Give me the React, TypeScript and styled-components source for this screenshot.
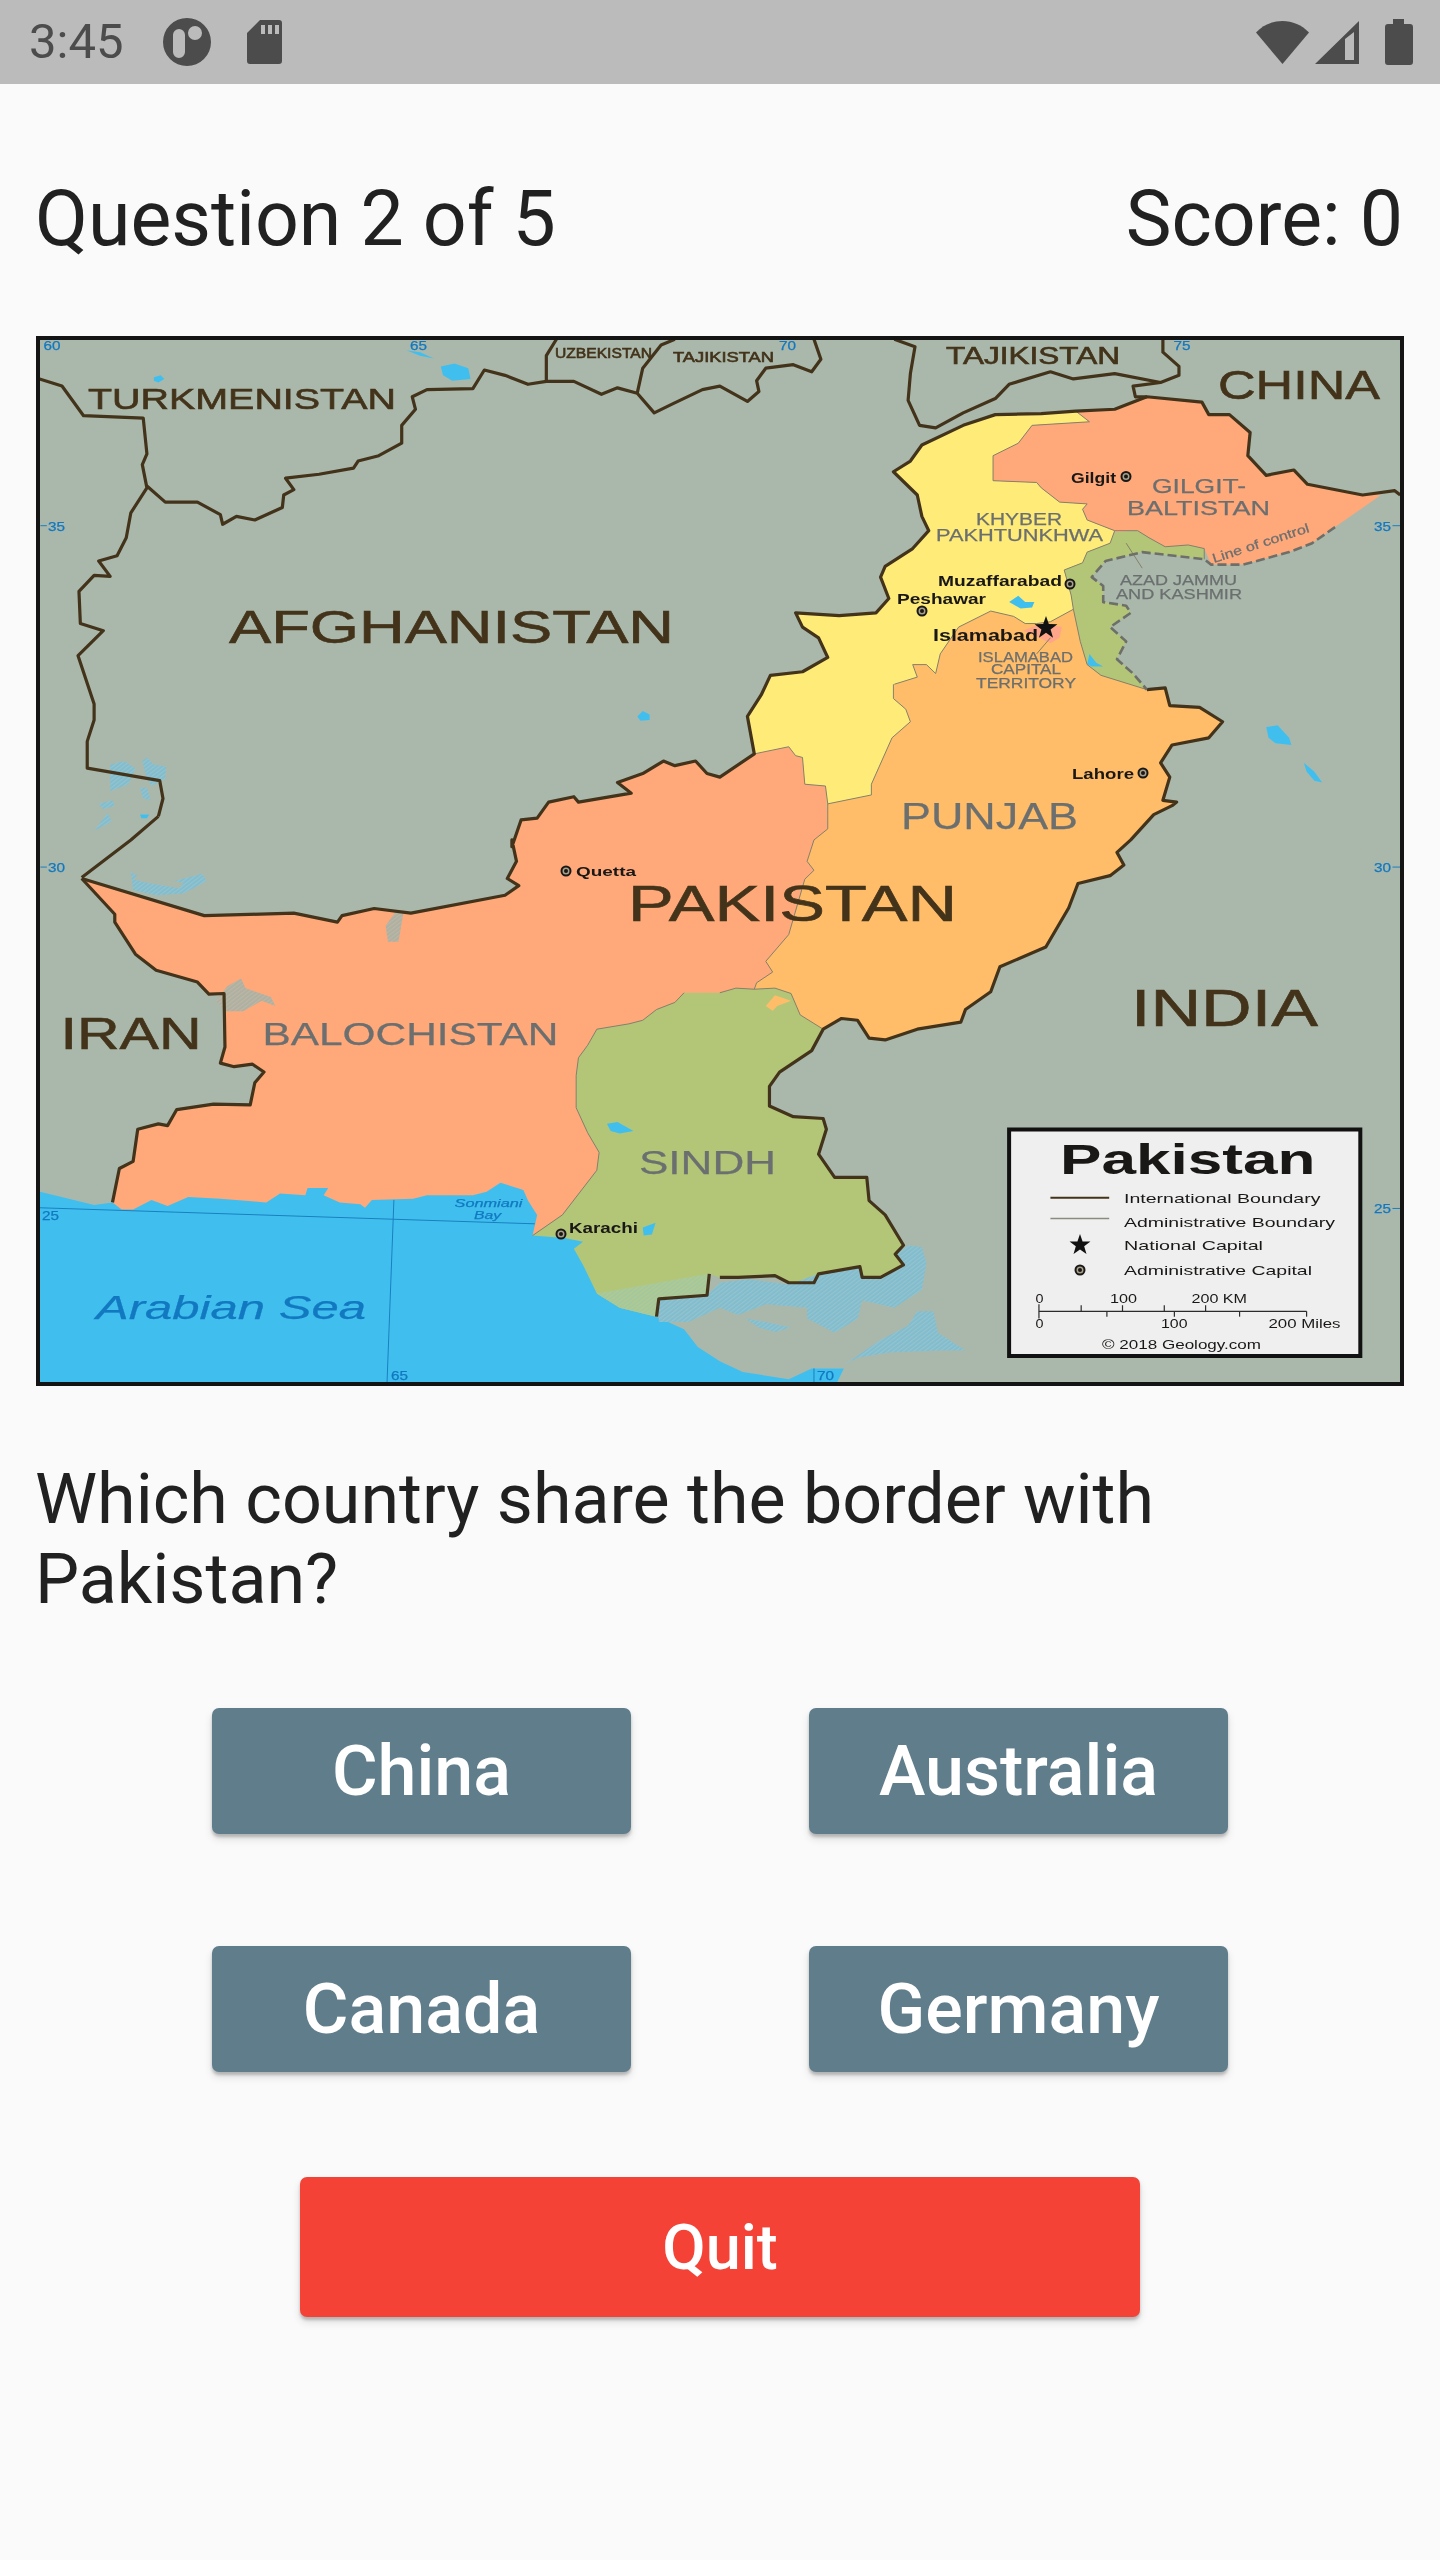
import React from 'react';
import styled, { createGlobalStyle } from 'styled-components';

// map outlines were traced in a 2.178 x 2.8 scaled space, four tiles of it
const shift = (dx: number, dy: number) => (s: string) =>
  s
    .trim()
    .split(/\s+/)
    .map(p => {
      const [x, y] = p.split(',').map(Number);
      return `${x + dx},${y + dy}`;
    })
    .join(' ');
const NW = shift(0, 0);
const NE = shift(1568, 0);
const SW = shift(0, 1456);
const SE = shift(1568, 1456);

const COLORS = {
  land: '#aab8ac',
  sea: '#40bfef',
  baloch: '#ffa87a',
  kp: '#ffec78',
  punjab: '#ffbd69',
  sindh: '#b3c678',
  dark: '#43331a',
  thin: '#86806a',
  loc: '#6d6f68',
};

const seaShape = [
  SW('86,985 150,1005 205,1022 245,1015 400,950 1200,950 1300,1100 1300,1270 1350,1310 1430,1335 1490,1370 1520,1420 1568,1460'),
  SE('50,1490 150,1510 200,1480 270,1480 255,1520'),
  SW('86,1520'),
].join(' ');

const balochNorth = [
  SW('178,108 445,212 640,205 735,230 745,212 815,192 895,205 1100,155 1130,128 1105,108 1125,60'),
  NW('1115,1456 1115,1475 1135,1400 1170,1395 1195,1350 1250,1335 1260,1350 1375,1325 1345,1295 1400,1270 1445,1235 1470,1248 1515,1235 1540,1270'),
  NE('0,1280 75,1215'),
].join(' ');

const balochShape = [
  balochNorth,
  NE('150,1195 165,1220 180,1225 185,1300 230,1305 235,1425'),
  SE('205,0 190,60 205,85 185,110 150,265 100,340 115,370 80,400 75,418 35,415 0,428'),
  SW('1470,455 1430,475 1400,505 1370,515 1300,530 1280,575 1260,610 1255,660 1255,750 1280,820 1305,875 1300,925 1255,1000 1225,1050 1160,1108 1170,1050 1150,1010 1140,980 1090,960 1060,985 1030,995 930,995 900,1005 810,1008 795,1030 785,1020 740,1015 705,995 715,975 670,975 665,995 610,990 580,1015 480,1005 410,1000 365,1025 330,1008 290,1035 265,1035 245,1015 260,920 290,900 300,810 345,795 365,800 385,755 465,740 545,742 555,680 575,650 550,628 510,635 480,625 490,580 488,430 455,432 430,398 340,365 295,320 250,230 250,208'),
].join(' ');

const sindhShape = [
  SW('1490,428'),
  SE('0,428 35,415 75,418 120,415 155,430 175,490 225,530 200,590 130,650 108,690 108,745 160,775 225,780 232,810 215,880 250,945 320,945 325,1010 360,1050 400,1135 382,1160 400,1190 350,1225 310,1225 305,1195 215,1215 205,1240 150,1240 120,1220 40,1225 0,1225'),
  SW('1545,1215 1540,1275 1435,1285 1430,1335 1350,1310 1300,1270 1270,1190 1250,1145 1270,1125 1230,1115 1160,1108 1225,1050 1255,1000 1300,925 1305,875 1280,820 1255,750 1255,660 1260,610 1280,575 1300,530 1370,515 1400,505 1430,475 1470,455'),
].join(' ');

const punjabEdge = NE('380,1020 430,1000 420,965 450,965 470,990 480,935 520,860 590,815 640,830 665,850 690,850 720,845 770,810');
const indiaNorth = NE('930,1035 970,1030 980,1080 1045,1085 1095,1125 1065,1170 985,1190 960,1240 980,1280 965,1345 995,1350 985,1360 945,1385');
const indiaSouth = SE('895,0 865,35 880,70 850,100 780,122 760,190 710,300 610,355 590,425 535,475 525,510 430,530 360,560 325,555 300,505 265,500 225,530');

const punjabShape = [
  punjabEdge,
  NE('785,900 800,965 830,995'),
  indiaNorth,
  indiaSouth,
  SE('175,490 155,430 120,415 75,418 80,400 115,370 100,340 150,265 185,110 205,85 190,60 205,0'),
  NE('235,1425 230,1305 235,1355 330,1330 330,1300 375,1170 415,1125 405,1090 378,1060'),
].join(' ');

const kpOuter = NE('75,1215 60,1110 90,1050 110,995 180,985 235,945 215,890 180,860 165,820 260,828 340,820 368,780 350,720 360,690 420,640 455,590 440,550 430,490 378,425 415,395 440,350 530,295 600,265 700,262 775,255');
const gbEdge = NE('775,255 805,285 680,295 650,345 595,380 595,450 690,455 700,470 740,510 800,515 790,530 800,560 860,590');

const kpShape = [
  kpOuter,
  gbEdge,
  NE('850,625 800,650 790,680 750,700 765,770 770,810 720,845 690,850 665,850 640,830 590,815 520,860 480,935 470,990 450,965 420,965 430,1000 380,1020 378,1060 405,1090 415,1125 375,1170 330,1300 330,1330 235,1355 230,1305 185,1300 180,1225 165,1220 150,1195'),
].join(' ');

const gbOuter = NE('775,255 860,250 930,215 1050,230 1065,265 1110,265 1155,315 1150,380 1190,435 1250,420 1280,460 1400,490 1470,478 1482,490');
const loc = NE('1340,580 1290,625 1240,650 1140,685 1070,685 1055,670 920,650 840,675 810,720 835,745 835,790 885,800 895,820 850,860 885,900 865,950 900,990 930,1035');

const gbShape = [
  NE('775,255 860,250 930,215 1050,230 1065,265 1110,265 1155,315 1150,380 1190,435 1250,420 1280,460 1400,490 1440,490'),
  NE('1340,580 1290,625 1240,650 1140,685 1070,685 1055,640 1020,630 970,635 935,610 910,590 860,595 860,590 800,560 790,530 800,515 740,510 700,470 690,455 595,450 595,380 650,345 680,295 805,285'),
].join(' ');

const ajkShape = NE('860,595 910,590 935,610 970,635 1020,630 1055,640 1055,670 920,650 840,675 810,720 835,745 835,790 885,800 895,820 850,860 885,900 865,950 900,990 930,1035 830,995 800,965 785,900 770,810 765,770 750,700 790,680 800,650 850,625');

const regions: [string, string][] = [
  [seaShape, COLORS.sea],
  [balochShape, COLORS.baloch],
  [sindhShape, COLORS.sindh],
  [punjabShape, COLORS.punjab],
  [kpShape, COLORS.kp],
  [gbShape, COLORS.baloch],
  [ajkShape, COLORS.sindh],
  [NE('660,870 700,850 745,860 740,890 720,905 680,880'), '#ffa58a'],
  [SE('100,465 120,435 155,450 125,465 115,478'), COLORS.punjab],
];

const lakes = [
  NW('335,160 350,155 358,165 345,175 335,170'),
  NW('960,130 990,122 1020,135 1025,165 985,170 965,155'),
  NW('885,85 915,90 945,108 915,100'),
  NW('1388,1110 1400,1095 1415,1105 1415,1120 1395,1122'),
  NW('305,1385 325,1385 320,1395 308,1395'),
  NE('630,790 650,772 665,790 685,790 680,805 655,808'),
  NE('800,965 805,935 820,960 835,970 810,970'),
  NE('1190,1140 1215,1135 1240,1170 1245,1190 1210,1185 1195,1170'),
  NE('1272,1240 1295,1265 1312,1295 1295,1290 1278,1265'),
  SW('1322,795 1345,790 1380,815 1350,822 1330,815'),
  SW('1400,1085 1428,1072 1420,1105 1402,1108'),
];

const marshes = [
  NW('240,1245 270,1235 295,1255 280,1300 240,1320'),
  NW('310,1235 320,1225 335,1245 362,1250 360,1285 330,1305 320,1285'),
  NW('305,1310 320,1310 328,1345 312,1340'),
  NW('215,1355 245,1345 250,1360 225,1370'),
  NW('205,1430 235,1380 243,1405'),
  SW('285,90 300,100 290,110 320,120 390,135 400,120 380,115 440,95 450,115 400,150 340,155 290,140'),
  SE('0,1240 60,1230 150,1245 215,1215 305,1195 315,1225 350,1225 400,1190 385,1160 410,1135 440,1140 450,1185 440,1260 380,1310 310,1290 300,1340 250,1380 190,1340 190,1310 100,1300 40,1330 0,1310'),
  SE('270,1470 350,1400 410,1360 430,1320 465,1320 475,1380 535,1430 480,1430 370,1435 300,1450'),
  SE('55,1340 100,1350 155,1365 120,1378 85,1365'),
  SW('1435,1285 1540,1275 1568,1240 1568,1310 1500,1350 1435,1350'),
];

const dryMarshes = [
  SW('840,240 865,195 880,195 868,285 845,285'),
  SW('495,410 525,388 535,415 590,440 600,465 570,450 530,480 490,480 470,450'),
];

const coastMarsh = SW('1300,1270 1545,1215 1540,1275 1435,1285 1430,1335 1350,1310');

const heavyBorders = [
  [balochNorth, kpOuter, gbOuter].join(' '),
  SW('178,108 250,208 250,230 295,320 340,365 430,398 455,432 488,430 490,580 480,625 510,635 550,628 575,650 555,680 545,742 465,740 385,755 365,800 345,795 300,810 290,900 260,920 245,1015'),
  NW('345,1390 355,1340 348,1290 190,1255 190,1180 205,1120 205,1075 170,940 225,870 175,850 172,760 205,715 240,718 215,675 255,660 275,610 285,540 320,470 310,405 320,375 312,275 182,268 135,185 86,165'),
  SW('178,105 285,0') + ' ' + NW('345,1390'),
  [NW('320,465 360,510 430,510 480,545 485,572 515,550 555,560 615,525 618,490 640,475 622,443 695,432 770,415 780,395 825,380 875,345 875,295 905,250 898,215 930,195 1030,192 1055,140 1100,155 1150,180 1190,172 1250,172 1310,208 1345,190 1388,205 1425,260 1465,235 1530,195'), NE('0,185 60,228 85,200 80,170 100,135 160,125 200,145 220,110 205,54')].join(' '),
  NW('1212,54 1190,100 1190,172'),
  NW('1470,54 1440,70 1400,135 1388,205'),
  NE('380,54 425,75 415,150 410,225 435,295 470,302 530,260 600,220 630,180 720,145 770,165 860,150 960,175 1000,155 1000,130 965,90 965,54'),
  NE('960,175 900,185 905,215 930,215'),
  [indiaNorth, indiaSouth, SE('200,590 130,650 108,690 108,745 160,775 225,780 232,810 215,880 250,945 320,945 325,1010 360,1050 400,1135 382,1160 400,1190 350,1225 310,1225 305,1195 215,1215 205,1240 150,1240 120,1220 40,1225 0,1225')].join(' '),
  SW('1545,1215 1540,1275 1435,1285 1430,1335'),
];

const thinBorders = [
  gbEdge,
  punjabEdge,
  NE('378,1020 378,1060 405,1090 415,1125 375,1170 330,1300 330,1330 235,1355 230,1305 185,1300 180,1225 165,1220 150,1195 75,1215'),
  NE('235,1355 235,1425') + ' ' + SE('205,0 190,60 205,85 185,110 150,265 100,340 115,370 80,400 75,418 35,415 0,428'),
  SW('1490,428 1470,455 1430,475 1400,505 1370,515 1300,530 1280,575 1260,610 1255,660 1255,750 1280,820 1305,875 1300,925 1255,1000 1225,1050 1160,1108'),
  SE('75,418 120,415 155,430 175,490 225,530'),
  NE('770,810 765,770 750,700 790,680 800,650 850,625 860,590 910,590 935,610 970,635 1020,630 1055,640 1055,670'),
  NE('770,810 785,900 800,965 830,995 930,1035'),
  NE('885,625 920,695'),
  NE('690,935 720,890'),
];

// graticule lines and legend rules, same traced space
const gridLines = [SW('86,1030 1165,1075'), SW('858,1008 843,1520'), SE('205,1480 205,1520'), NW('88,576 102,576'), NW('88,1532 102,1532'), NE('1465,576 1482,576'), NE('1465,1532 1482,1532'), SE('1465,1032 1482,1032')];
const scaleLines = [
  SE('695,1320 1278,1320'),
  SE('695,1300 695,1340'),
  ...[787, 877, 968, 1058].map(x => SE(`${x},1303 ${x},1320`)),
  ...[843, 990, 1132, 1278].map(x => SE(`${x},1320 ${x},1335`)),
];

type Tone = 'dark' | 'gray' | 'black' | 'blue';
type Label = { t: string; x: number; y: number; w: number; s: number; tone: Tone; bold?: boolean; italic?: boolean };

const labels: Label[] = [
  { t: 'TURKMENISTAN', x: 88, y: 408.5, w: 308, s: 29, tone: 'dark' },
  { t: 'AFGHANISTAN', x: 229, y: 643, w: 445, s: 46, tone: 'dark' },
  { t: 'UZBEKISTAN', x: 555, y: 358, w: 97, s: 14, tone: 'dark' },
  { t: 'TAJIKISTAN', x: 673, y: 362, w: 101, s: 14, tone: 'dark' },
  { t: 'TAJIKISTAN', x: 946, y: 364, w: 174, s: 23, tone: 'dark' },
  { t: 'CHINA', x: 1218, y: 399, w: 162, s: 40, tone: 'dark' },
  { t: 'Gilgit', x: 1071, y: 482.5, w: 45, s: 14, tone: 'black', bold: true },
  { t: 'GILGIT-', x: 1152, y: 493, w: 94, s: 21, tone: 'gray' },
  { t: 'BALTISTAN', x: 1127, y: 514.5, w: 143, s: 21, tone: 'gray' },
  { t: 'KHYBER', x: 976, y: 524.5, w: 86, s: 17, tone: 'gray' },
  { t: 'PAKHTUNKHWA', x: 936, y: 541, w: 167, s: 17, tone: 'gray' },
  { t: 'AZAD JAMMU', x: 1120, y: 585, w: 117, s: 15, tone: 'gray' },
  { t: 'AND KASHMIR', x: 1116, y: 598.5, w: 126, s: 15, tone: 'gray' },
  { t: 'Muzaffarabad', x: 938, y: 586, w: 124, s: 14.5, tone: 'black', bold: true },
  { t: 'Peshawar', x: 897, y: 604, w: 89, s: 14, tone: 'black', bold: true },
  { t: 'Islamabad', x: 933, y: 641, w: 105, s: 16, tone: 'black', bold: true },
  { t: 'ISLAMABAD', x: 978, y: 662, w: 95, s: 14, tone: 'gray' },
  { t: 'CAPITAL', x: 991, y: 674, w: 70, s: 14, tone: 'gray' },
  { t: 'TERRITORY', x: 976, y: 688, w: 100, s: 14, tone: 'gray' },
  { t: 'Lahore', x: 1072, y: 779, w: 62, s: 14, tone: 'black', bold: true },
  { t: 'PUNJAB', x: 901, y: 828.5, w: 177, s: 36, tone: 'gray' },
  { t: 'Quetta', x: 576, y: 876, w: 60, s: 13, tone: 'black', bold: true },
  { t: 'PAKISTAN', x: 628, y: 921, w: 329, s: 50, tone: 'dark' },
  { t: 'IRAN', x: 60.5, y: 1049, w: 141, s: 44, tone: 'dark' },
  { t: 'BALOCHISTAN', x: 262.5, y: 1045, w: 296, s: 31, tone: 'gray' },
  { t: 'SINDH', x: 639, y: 1174, w: 137, s: 33, tone: 'gray' },
  { t: 'INDIA', x: 1131, y: 1026, w: 187, s: 52, tone: 'dark' },
  { t: 'Arabian Sea', x: 96, y: 1318.5, w: 270, s: 33, tone: 'blue', italic: true },
  { t: 'Sonmiani', x: 454.5, y: 1207, w: 68, s: 11, tone: 'blue', italic: true },
  { t: 'Bay', x: 474, y: 1218.5, w: 27, s: 11, tone: 'blue', italic: true },
  { t: 'Karachi', x: 569, y: 1233, w: 69, s: 14, tone: 'black', bold: true },
  { t: '60', x: 43.5, y: 349.5, w: 17, s: 12, tone: 'blue' },
  { t: '65', x: 410, y: 349.5, w: 17, s: 12, tone: 'blue' },
  { t: '70', x: 779, y: 349.5, w: 17, s: 12, tone: 'blue' },
  { t: '75', x: 1173.5, y: 349.5, w: 17, s: 12, tone: 'blue' },
  { t: '35', x: 48, y: 530.5, w: 17, s: 12, tone: 'blue' },
  { t: '35', x: 1374, y: 530.5, w: 17, s: 12, tone: 'blue' },
  { t: '30', x: 48, y: 872, w: 17, s: 12, tone: 'blue' },
  { t: '30', x: 1374, y: 872, w: 17, s: 12, tone: 'blue' },
  { t: '25', x: 42, y: 1219.5, w: 17, s: 12, tone: 'blue' },
  { t: '25', x: 1374, y: 1213, w: 17, s: 12, tone: 'blue' },
  { t: '65', x: 391, y: 1380, w: 17, s: 12, tone: 'blue' },
  { t: '70', x: 817, y: 1380, w: 17, s: 12, tone: 'blue' },
  { t: 'Pakistan', x: 1060, y: 1174, w: 255.5, s: 43, tone: 'black', bold: true },
  { t: 'International Boundary', x: 1124, y: 1202.5, w: 196.5, s: 13.5, tone: 'black' },
  { t: 'Administrative Boundary', x: 1124, y: 1227, w: 211, s: 13.5, tone: 'black' },
  { t: 'National Capital', x: 1124, y: 1250, w: 139, s: 13.5, tone: 'black' },
  { t: 'Administrative Capital', x: 1124, y: 1275, w: 188, s: 13.5, tone: 'black' },
  { t: '0', x: 1035.5, y: 1302.5, w: 8, s: 12, tone: 'black' },
  { t: '100', x: 1110, y: 1302.5, w: 27, s: 12, tone: 'black' },
  { t: '200 KM', x: 1191.5, y: 1302.5, w: 55.5, s: 12, tone: 'black' },
  { t: '0', x: 1035.5, y: 1328, w: 8, s: 12, tone: 'black' },
  { t: '100', x: 1161, y: 1328, w: 26.5, s: 12, tone: 'black' },
  { t: '200 Miles', x: 1268.5, y: 1328, w: 72, s: 12, tone: 'black' },
  { t: '© 2018 Geology.com', x: 1102, y: 1348.5, w: 159, s: 12, tone: 'black' },
];

const capitals = [
  [1126, 476.5],
  [1070, 584],
  [922, 611],
  [1143, 773],
  [566, 871],
  [561, 1234],
  [1080, 1270],
];

const starPoints = (cx: number, cy: number, r: number) =>
  Array.from({ length: 10 }, (_, i) => {
    const a = (Math.PI / 5) * i - Math.PI / 2;
    const d = i % 2 ? r * 0.4 : r;
    return `${cx + Math.cos(a) * d},${cy + Math.sin(a) * d}`;
  }).join(' ');

const toneColor: Record<Tone, string> = {
  dark: '#43331a',
  gray: '#6b6f6f',
  black: '#1a1816',
  blue: '#1278c0',
};

const toneStroke: Record<Tone, number> = {
  dark: 0.6,
  gray: 0.25,
  black: 0,
  blue: 0.25,
};

const hatches: [string, string, string][] = [
  ['hatch', '#82bccd', '#93c4cf'],
  ['hatch-dry', '#aeb0a2', '#bcb6a4'],
  ['hatch-coast', '#a5c79f', '#b0cb8e'],
];

const options = ['China', 'Australia', 'Canada', 'Germany'];

function StatusIcons() {
  return (
    <StatusRow>
      <StatusLeft>
        <StatusTime>3:45</StatusTime>
        <svg width="50" height="50" viewBox="0 0 50 50">
          <path
            fill="#4c4c4c"
            fillRule="evenodd"
            d="M25 1a24 24 0 1 0 0 48a24 24 0 0 0 0-48zM17 12a6 6 0 0 1 6 6v17a6 6 0 0 1-12 0V18a6 6 0 0 1 6-6zM33 9a7 7 0 1 1 0 14a7 7 0 0 1 0-14z"
          />
        </svg>
        <SdIcon width="36" height="44" viewBox="0 0 36 44">
          <path
            fill="#4c4c4c"
            fillRule="evenodd"
            d="M13 0H32a3 3 0 0 1 3 3V41a3 3 0 0 1-3 3H3a3 3 0 0 1-3-3V13zM14 5v9h4V5zM21 5v9h4V5zM28 5v9h4V5z"
          />
        </SdIcon>
      </StatusLeft>
      <StatusRight>
        <svg width="54" height="45" viewBox="0 0 54 45">
          <path fill="#4c4c4c" d="M0 12.5C14 -3 39 -3 53 12.5L26.5 44z" />
        </svg>
        <svg width="45" height="44" viewBox="0 0 45 44">
          <path
            fill="#4c4c4c"
            fillRule="evenodd"
            d="M0 44L44 1V44zM30 19v21h9V12z"
          />
        </svg>
        <svg width="28" height="46" viewBox="0 0 28 46">
          <path
            fill="#4c4c4c"
            d="M8 0h11v5h6a3 3 0 0 1 3 3v35a3 3 0 0 1-3 3H3a3 3 0 0 1-3-3V8a3 3 0 0 1 3-3h5z"
          />
        </svg>
      </StatusRight>
    </StatusRow>
  );
}

function PakistanMap() {
  return (
    <MapFrame>
      <MapSvg viewBox="40 340 1360 1042" width="1360" height="1042">
        <defs>
          {hatches.map(([id, base, stripe]) => (
            <pattern key={id} id={id} width="8" height="8" patternUnits="userSpaceOnUse" patternTransform="rotate(45)">
              <rect width="8" height="8" fill={base} />
              <rect width="3" height="8" fill={stripe} />
            </pattern>
          ))}
        </defs>
        <rect x="40" y="340" width="1360" height="1042" fill={COLORS.land} />
        <g transform="translate(0 320) scale(0.4591 0.3571)">
          {regions.map(([points, fill], i) => (
            <Region key={i} points={points} $fill={fill} />
          ))}
          {marshes.map((points, i) => (
            <Region key={i} points={points} $fill="url(#hatch)" />
          ))}
          {dryMarshes.map((points, i) => (
            <Region key={i} points={points} $fill="url(#hatch-dry)" />
          ))}
          <Region points={coastMarsh} $fill="url(#hatch-coast)" />
          {lakes.map((points, i) => (
            <Region key={i} points={points} $fill={COLORS.sea} />
          ))}
          {gridLines.map((points, i) => (
            <Line key={i} points={points} $color="#1a7fc0" $width={1} />
          ))}
          {thinBorders.map((points, i) => (
            <Line key={i} points={points} $color={COLORS.thin} $width={1} />
          ))}
          {heavyBorders.map((points, i) => (
            <Line key={i} points={points} $color={COLORS.dark} $width={3.2} />
          ))}
          <Line points={loc} $color={COLORS.loc} $width={2.6} $dashed />
          <LegendBox points={SE('630,811 1395,811 1395,1445 630,1445')} />
          <Line points={SE('720,1002 848,1002')} $color={COLORS.dark} $width={2} />
          <Line points={SE('720,1060 848,1060')} $color="#8a8a80" $width={1.5} />
          {scaleLines.map((points, i) => (
            <Line key={i} points={points} $color="#2b2b2b" $width={1.2} />
          ))}
        </g>
        <Star points={starPoints(1046, 628, 12)} />
        <Star points={starPoints(1080, 1245, 11)} />
        {capitals.map(([cx, cy], i) => (
          <g key={i}>
            <CapitalRing cx={cx} cy={cy} r="4.5" />
            <CapitalCore cx={cx} cy={cy} r="2" />
          </g>
        ))}
        {labels.map((l, i) => (
          <MapLabel
            key={i}
            x={l.x}
            y={l.y}
            textLength={l.w}
            lengthAdjust="spacingAndGlyphs"
            $size={l.s}
            $tone={l.tone}
            $bold={l.bold}
            $italic={l.italic}
          >
            {l.t}
          </MapLabel>
        ))}
        <MapLabel
          x="0"
          y="0"
          textLength="101"
          lengthAdjust="spacingAndGlyphs"
          transform="translate(1214 563) rotate(-18)"
          $size={13}
          $tone="gray"
        >
          Line of control
        </MapLabel>
      </MapSvg>
    </MapFrame>
  );
}

export default function App() {
  return (
    <>
      <GlobalStyle />
      <StatusIcons />
      <Page>
        <QuizHeader>
          <span>Question 2 of 5</span>
          <span>Score: 0</span>
        </QuizHeader>
        <PakistanMap />
        <QuestionText>Which country share the border with Pakistan?</QuestionText>
        <AnswerGrid>
          {options.map(option => (
            <AnswerButton key={option} type="button">
              {option}
            </AnswerButton>
          ))}
        </AnswerGrid>
        <QuitButton type="button">Quit</QuitButton>
      </Page>
    </>
  );
}

const GlobalStyle = createGlobalStyle`
  html, body {
    margin: 0;
    padding: 0;
    background: #fafafa;
    font-family: Roboto, "Liberation Sans", sans-serif;
  }
  #root {
    min-height: 2560px;
  }
`;

const StatusRow = styled.div`
  display: flex;
  justify-content: space-between;
  align-items: center;
  box-sizing: border-box;
  height: 84px;
  padding: 0 27px 0 29px;
  background: #bbbbbb;
`;

const StatusLeft = styled.div`
  display: flex;
  align-items: center;
  gap: 32px;
`;

const StatusRight = styled.div`
  display: flex;
  align-items: center;
  gap: 5px;
  svg:last-child {
    margin-left: 20px;
  }
`;

const SdIcon = styled.svg`
  margin-left: 3px;
`;

const StatusTime = styled.span`
  width: 101px;
  font-size: 49px;
  line-height: 84px;
  color: #4c4c4c;
`;

const Page = styled.main`
  display: flex;
  flex-direction: column;
  align-items: center;
  padding: 90px 35px 0;
`;

const QuizHeader = styled.header`
  display: flex;
  justify-content: space-between;
  box-sizing: border-box;
  width: 100%;
  padding-right: 2px;
  font-size: 77px;
  line-height: 90px;
  color: #212121;
`;

const MapFrame = styled.figure`
  box-sizing: border-box;
  width: 1368px;
  height: 1050px;
  margin: 72px 0 0;
  border: 4px solid #141414;
`;

const MapSvg = styled.svg`
  display: block;
  filter: blur(0.6px);
`;

const Region = styled.polygon<{ $fill: string }>`
  fill: ${p => p.$fill};
`;

const Line = styled.polyline<{ $color: string; $width: number; $dashed?: boolean }>`
  fill: none;
  stroke: ${p => p.$color};
  stroke-width: ${p => p.$width}px;
  stroke-linejoin: round;
  vector-effect: non-scaling-stroke;
  ${p => (p.$dashed ? 'stroke-dasharray: 9 4;' : '')}
`;

const LegendBox = styled.polygon`
  fill: #efefef;
  stroke: #111;
  stroke-width: 4px;
  vector-effect: non-scaling-stroke;
`;

const Star = styled.polygon`
  fill: #111;
`;

const CapitalRing = styled.circle`
  fill: #a8a08a;
  stroke: #1a1816;
  stroke-width: 2px;
`;

const CapitalCore = styled.circle`
  fill: #1a1816;
`;

const MapLabel = styled.text<{ $size: number; $tone: Tone; $bold?: boolean; $italic?: boolean }>`
  font-family: 'Liberation Sans', Arial, sans-serif;
  font-size: ${p => p.$size}px;
  font-weight: ${p => (p.$bold ? 700 : 400)};
  font-style: ${p => (p.$italic ? 'italic' : 'normal')};
  fill: ${p => toneColor[p.$tone]};
  stroke: ${p => toneColor[p.$tone]};
  stroke-width: ${p => toneStroke[p.$tone]}px;
`;

const QuestionText = styled.p`
  width: 100%;
  margin: 73px 0 0;
  font-size: 70px;
  line-height: 80px;
  color: #212121;
`;

const AnswerGrid = styled.div`
  display: grid;
  grid-template-columns: 419px 419px;
  column-gap: 178px;
  row-gap: 112px;
  margin-top: 89px;
`;

const AnswerButton = styled.button`
  height: 126px;
  padding: 0;
  border: none;
  border-radius: 7px;
  background: #607d8b;
  box-shadow: 0 3px 3px rgba(0, 0, 0, 0.2), 0 5px 8px rgba(0, 0, 0, 0.12);
  color: #fff;
  font-family: Roboto, sans-serif;
  font-size: 70px;
  font-weight: 500;
`;

const QuitButton = styled(AnswerButton)`
  width: 840px;
  height: 140px;
  margin-top: 105px;
  background: #f44336;
  font-size: 63px;
`;
